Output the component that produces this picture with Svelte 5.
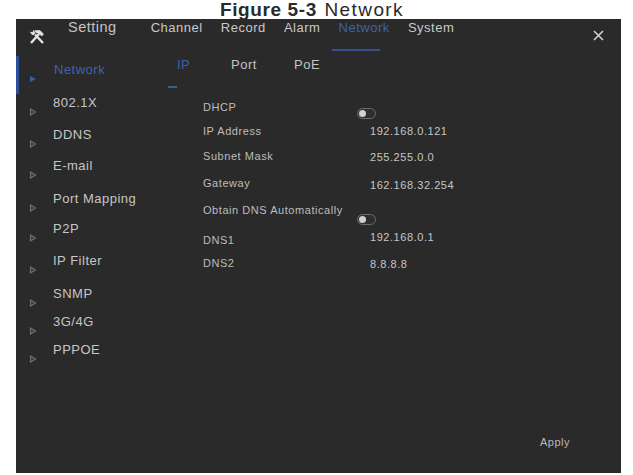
<script lang="ts">
	const sideItems = ['Network', '802.1X', 'DDNS', 'E-mail', 'Port Mapping', 'P2P', 'IP Filter', 'SNMP', '3G/4G', 'PPPOE'];
	const topTabs = ['Channel', 'Record', 'Alarm', 'Network', 'System'];
	const subTabs = ['IP', 'Port', 'PoE'];
	// dy: how far the control column sits below its label
	const fields = [
		{ label: 'DHCP', toggle: true, dy: 8 },
		{ label: 'IP Address', value: '192.168.0.121', dy: 0 },
		{ label: 'Subnet Mask', value: '255.255.0.0', dy: 1 },
		{ label: 'Gateway', value: '162.168.32.254', dy: 2 },
		{ label: 'Obtain DNS Automatically', toggle: true, dy: 11 },
		{ label: 'DNS1', value: '192.168.0.1', dy: -3 },
		{ label: 'DNS2', value: '8.8.8.8', dy: 1 }
	];
</script>

<div class="page">
	<h1 class="caption"><b>Figure 5-3</b> Network</h1>
	<div class="panel">
		<header class="topbar">
			<svg class="tools" width="16" height="16" viewBox="0 0 16 16" fill="none" stroke="#e2e2e2">
				<path d="M2 14 L10 5" stroke-width="2.4" />
				<path d="M6 1.5 L11 1.5 L14.5 5 L13 7 L9.5 4.5 L7 3.5 Z" fill="#e2e2e2" stroke-width="0.6" />
				<path d="M14 14 L6 5.5" stroke-width="2.4" />
				<path d="M1.5 3 L3 5.5 L5 5.5 L6 3.5 L4.5 1.5 L4 3.5 L2.5 3.5 Z" fill="#e2e2e2" stroke-width="0.8" />
			</svg>
			<span class="title">Setting</span>
			<nav class="tabs">
				{#each topTabs as tab}
					<span class="tab" class:active={tab === 'Network'}>{tab}</span>
				{/each}
			</nav>
			<svg class="close" width="11" height="11" viewBox="0 0 11 11" stroke="#d0d0d0" stroke-width="1.6">
				<path d="M1 1 L10 10 M10 1 L1 10" />
			</svg>
		</header>

		<div class="body">
			<aside class="side">
				{#each sideItems as item, i}
					<div class="side-item" class:active={i === 0}>
						<svg class="arrow" width="8" height="8" viewBox="0 0 8 8">
							{#if i === 0}
								<path d="M1 1 L7 4 L1 7 Z" fill="#3a5fa8" />
							{:else}
								<path d="M1.5 1 L6.5 4 L1.5 7 Z" fill="#3c3c3c" stroke="#6e6e6e" stroke-width="1.2" />
							{/if}
						</svg>
						<span>{item}</span>
					</div>
				{/each}
			</aside>

			<main class="content">
				<div class="subtabs">
					{#each subTabs as tab, i}
						<span class="subtab" class:active={i === 0}>{tab}</span>
					{/each}
				</div>
				<div class="form">
					{#each fields as f}
						<div class="row">
							<span class="label">{f.label}</span>
							{#if f.toggle}
								<span class="toggle" style="margin-top: {f.dy}px"><i></i></span>
							{:else}
								<span class="value" style="margin-top: {f.dy}px">{f.value}</span>
							{/if}
						</div>
					{/each}
				</div>
				<div class="actions"><span class="apply">Apply</span></div>
			</main>
		</div>
	</div>
</div>

<style>
	:global(body) {
		margin: 0;
		background: #fff;
	}

	.page {
		width: 633px;
		height: 475px;
		overflow: hidden;
		font-family: 'Liberation Sans', Arial, sans-serif;
		display: flex;
		flex-direction: column;
	}

	.caption {
		margin: 0;
		height: 19px;
		padding-left: 220px;
		font-size: 19px;
		line-height: 20px;
		font-weight: 400;
		letter-spacing: 1.4px;
		color: #2a2a2a;
		white-space: nowrap;
	}

	.caption b {
		letter-spacing: 0.6px;
		margin-right: 1px;
	}

	.panel {
		width: 605px;
		height: 454px;
		margin-left: 16px;
		background: #2a2a2a;
		display: flex;
		flex-direction: column;
		letter-spacing: 0.5px;
	}

	.topbar {
		height: 34px;
		display: flex;
		position: relative;
		color: #c8c8c8;
	}

	.tools {
		margin: 10px 0 0 13px;
		flex: none;
	}

	.title {
		margin: 0 0 0 23px;
		font-size: 14.5px;
		line-height: 16px;
		color: #c4c4c4;
	}

	.tabs {
		display: flex;
		gap: 18.2px;
		margin: 1px 0 0 34px;
		font-size: 13px;
		line-height: 16px;
	}

	.tab.active {
		color: #3f62ad;
		position: relative;
	}

	.tab.active::after {
		content: '';
		position: absolute;
		left: -7px;
		right: 10px;
		top: 29px;
		height: 2px;
		background: #33508f;
	}

	.close {
		position: absolute;
		right: 17px;
		top: 11px;
	}

	.body {
		flex: 1;
		display: flex;
	}

	.side {
		width: 120px;
		padding-top: 8px;
		display: grid;
		grid-template-rows: 33px 32px 31px 33px 30px 32px 33px 28px 28px 28px;
		align-content: start;
		position: relative;
		font-size: 13px;
		color: #c6c6c6;
	}

	.side::before {
		content: '';
		position: absolute;
		left: 0;
		top: 3px;
		width: 3px;
		height: 38px;
		background: #2f4f96;
	}

	.side-item {
		display: flex;
		align-items: flex-start;
		padding-left: 13px;
		line-height: 18px;
		white-space: nowrap;
	}

	.side-item span {
		margin-left: 16px;
	}

	.side-item.active {
		color: #3f62ad;
	}

	.side-item.active span {
		margin-left: 17px;
	}

	.arrow {
		margin-top: 14px;
		flex: none;
	}

	.content {
		flex: 1;
		display: flex;
		flex-direction: column;
		padding-left: 25px;
	}

	.subtabs {
		display: grid;
		grid-template-columns: 54px 63px auto;
		justify-content: start;
		padding: 4px 0 0 16px;
		height: 40px;
		box-sizing: content-box;
		font-size: 13px;
		line-height: 16px;
		color: #c4c4c4;
	}

	.subtab {
		position: relative;
	}

	.subtab.active {
		color: #3f62ad;
	}

	.subtab.active::after {
		content: '';
		position: absolute;
		left: -9px;
		top: 29px;
		width: 9px;
		height: 2px;
		background: #3f5b9c;
	}

	.form {
		width: 310px;
		display: grid;
		grid-template-rows: 24px 25px 27px 27px 30px 23px 21px;
		align-content: start;
		margin: 3px 0 0 42px;
		font-size: 11px;
		color: #bdbdbd;
	}

	.row {
		display: flex;
		line-height: 14px;
	}

	.label {
		width: 154px;
		flex: none;
		white-space: nowrap;
		letter-spacing: 0.55px;
	}

	.value {
		margin-left: 13px;
		color: #c6c6c6;
		letter-spacing: 0.55px;
	}

	.toggle {
		width: 19px;
		height: 11px;
		border-radius: 6px;
		border: 1.5px solid #6c6c6c;
		background: #2e2e2e;
		box-sizing: border-box;
		display: flex;
		align-items: center;
		padding-left: 1px;
		margin-left: 0;
	}

	.toggle i {
		width: 7px;
		height: 7px;
		border-radius: 50%;
		background: #d0d0d0;
	}

	.actions {
		margin-top: auto;
		padding: 0 51px 24px 0;
		display: flex;
		justify-content: flex-end;
		font-size: 11px;
		line-height: 14px;
		color: #b8b8b8;
	}
</style>
